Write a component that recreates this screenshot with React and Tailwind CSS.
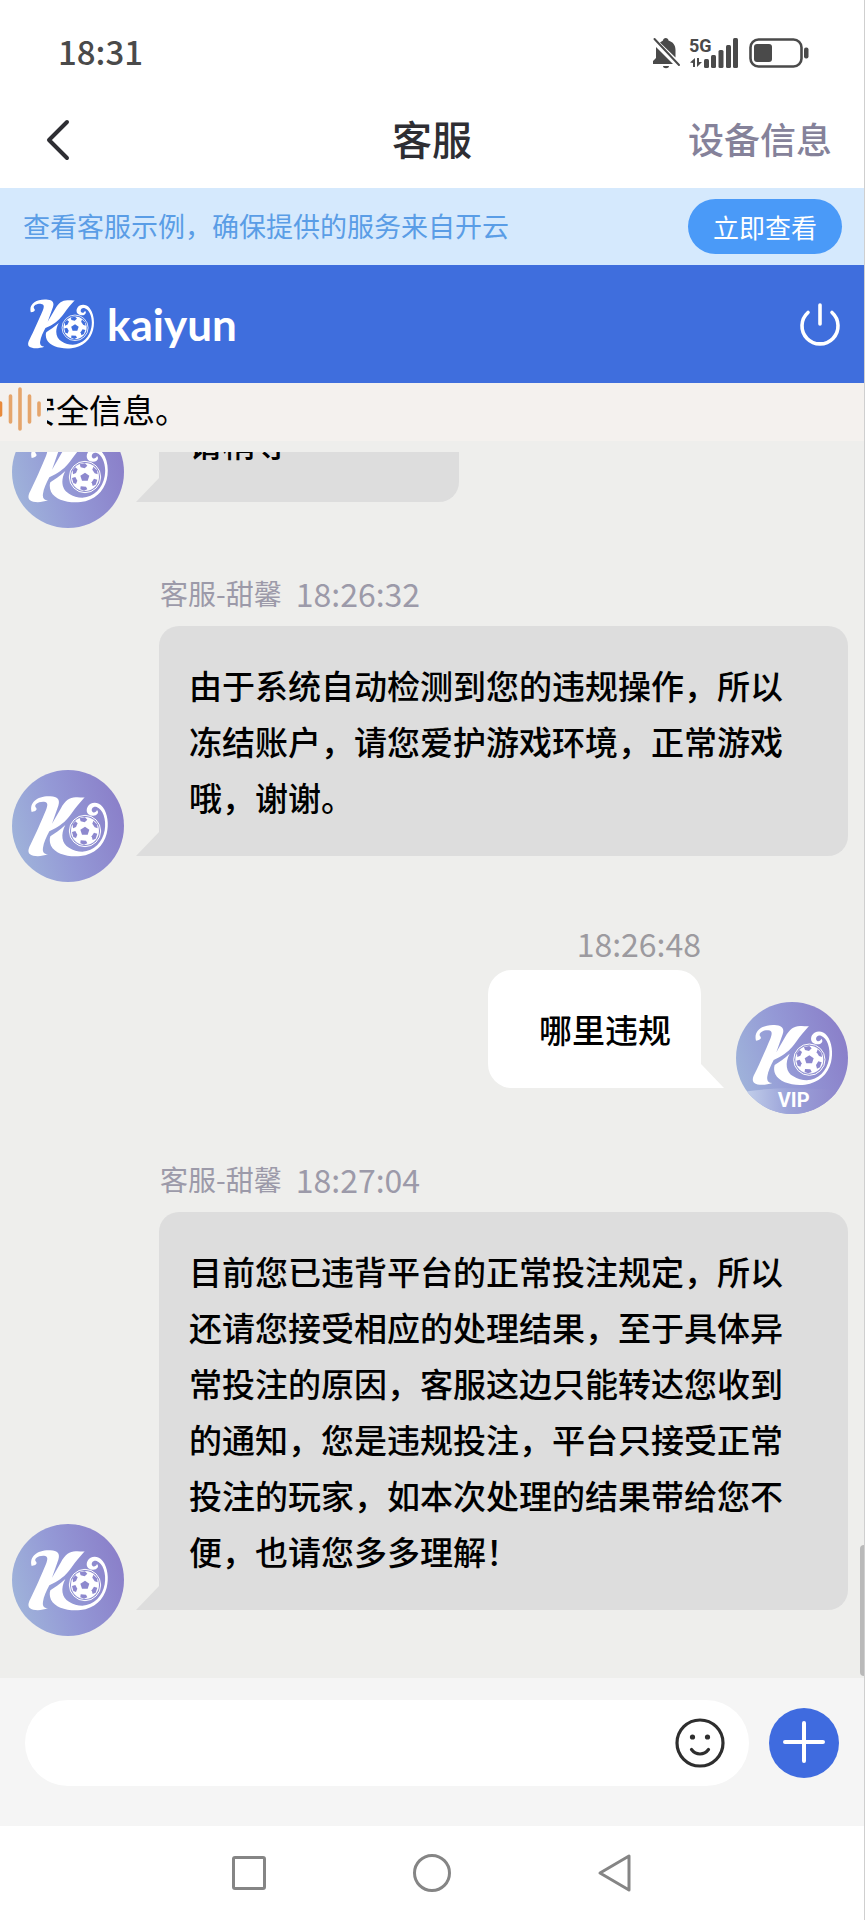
import React from "react";

function Ball() {
  return (
    <g>
      <circle cx="254" cy="210" r="47" fill="none" stroke="#fff" strokeWidth="3" />
      <circle cx="254" cy="210" r="42" fill="#fff" />
      <g fill="currentColor">
        <path d="M254 197 l13 9 -5 15 h-17 l-5 -15z" />
        <path d="M238 172 l16 -3 7 7 -8 8 -12 -3z" />
        <path d="M279 179 l11 11 2 12 -9 -3 -7 -11z" />
        <path d="M281 215 l10 3 -5 15 -9 4 -3 -11z" />
        <path d="M241 238 l16 1 4 8 -10 4 -11 -4z" />
        <path d="M215 213 l10 -3 6 11 -4 10 -8 -3z" />
        <path d="M217 190 l8 -9 7 6 -5 11 -9 4z" />
      </g>
    </g>
  );
}

function Emblem() {
  return (
    <g>
      <path
        fill="#fff"
        d="M94 153 C86 124 112 104 150 106 C172 107 180 116 174 134 L155 188 L181 143 C196 117 207 110 226 109 C238 108 247 111 253 109 C240 124 227 138 214 157 C199 178 186 190 165 202 L147 211 C138 228 130 245 128 260 C126 272 130 279 143 280 C124 287 99 288 88 279 C82 273 84 263 90 252 C105 222 123 180 137 147 C143 131 143 123 131 122 C112 121 101 131 106 139 C112 145 108 151 94 153Z"
      />
      <path
        fill="#fff"
        d="M150 226 C163 217 179 207 195 192 C180 220 184 248 206 260 C218 268 232 272 246 272 C281 270 307 244 313 208 C319 175 307 144 289 138 C279 135 272 143 275 151 C279 158 288 154 290 147 C298 155 289 165 277 164 C261 163 255 150 262 137 C270 123 293 120 307 138 C322 157 326 190 319 218 C310 254 282 280 241 285 C203 289 164 278 152 254 C148 245 147 234 150 226Z"
      />
      <Ball />
    </g>
  );
}

function Avatar({ vip = false }) {
  return (
    <svg
      className="size-28 shrink-0 text-[#8d88ce]"
      viewBox="35 27 336 336"
      role="img"
      aria-label={vip ? "VIP" : "客服"}
    >
      <defs>
        <linearGradient id="disc" x1="0" y1="0.65" x2="1" y2="0.35">
          <stop offset="0" stopColor="#9fb3da" />
          <stop offset="0.45" stopColor="#9499d6" />
          <stop offset="1" stopColor="#8a7fc9" />
        </linearGradient>
        <linearGradient id="ribbon" x1="0" y1="0" x2="1" y2="0">
          <stop offset="0" stopColor="#c3d0ea" />
          <stop offset="0.45" stopColor="#9ba3d9" />
          <stop offset="1" stopColor="#8f87cc" />
        </linearGradient>
        <clipPath id="round">
          <circle cx="203" cy="195" r="168" />
        </clipPath>
      </defs>
      <circle cx="203" cy="195" r="168" fill="url(#disc)" />
      {vip && (
        <path
          clipPath="url(#round)"
          fill="url(#ribbon)"
          d="M60 296 C150 282 260 284 350 294 L330 370 H60Z"
        />
      )}
      <g transform={vip ? "translate(1 -10)" : undefined}>
        <Emblem />
      </g>
      {vip && (
        <text
          x="208"
          y="343"
          textAnchor="middle"
          fill="#fff"
          fontSize="60"
          fontWeight="700"
          fontFamily="Roboto, sans-serif"
        >
          VIP
        </text>
      )}
    </svg>
  );
}

function AgentMessage({ name, time, children }) {
  return (
    <article className="pr-4 pl-3">
      {name && (
        <p className="mb-[13px] flex items-center gap-3.5 pl-[148px] text-[28px] leading-10 text-[#9c9aa9]">
          <span>{name}</span>
          <time className="text-[32px]">{time}</time>
        </p>
      )}
      <div className="flex items-end">
        <Avatar />
        <svg className="mb-[26px] ml-3 h-6 w-[23px] shrink-0" viewBox="0 0 23 24" aria-hidden="true">
          <path d="M0 24 L23 0 V24Z" fill="#dddddd" />
        </svg>
        <p className="mb-[26px] min-w-[300px] rounded-[20px] rounded-bl-none bg-[#dddddd] py-[31px] pr-10 pl-[30px] text-[33px] leading-[56px] font-medium text-black">
          {children}
        </p>
      </div>
    </article>
  );
}

function UserMessage({ time, children }) {
  return (
    <article className="pr-4 pl-3">
      <p className="mb-[11px] pr-[147px] text-right text-[32px] leading-8 text-[#9c9a9f]">
        <time>{time}</time>
      </p>
      <div className="flex items-end justify-end">
        <p className="mb-[26px] rounded-[24px] rounded-br-none bg-white py-[31px] pr-[30px] pl-[51px] text-[33px] leading-[56px] font-medium text-black">
          {children}
        </p>
        <svg className="mr-3 mb-[26px] h-6 w-[23px] shrink-0" viewBox="0 0 23 24" aria-hidden="true">
          <path d="M0 0 L23 24 H0Z" fill="#fff" />
        </svg>
        <Avatar vip />
      </div>
    </article>
  );
}

function StatusBar() {
  return (
    <div className="flex h-[106px] shrink-0 items-center justify-between pr-[55px] pl-[58px] text-[#4a4a4a]">
      <time className="pb-1 text-[33px] leading-10 font-medium">18:31</time>
      <svg className="h-8 w-[156px] overflow-visible" viewBox="0 0 156 32" aria-hidden="true">
        <g fill="#4a4a4a">
          <path d="M0 27 V24 L3 21 V10 L20 27Z" />
          <path d="M7 5.500 L10 3.500 C10 0 15.500 0 15.500 3.500 C20 5 22.500 8 22.500 13 V20.500Z" />
          <path d="M10 29 H16 C16 32 10 32 10 29Z" />
          <text x="36" y="15" fontSize="18" fontWeight="700" fontFamily="Roboto, sans-serif">
            5G
          </text>
          <path d="M37 25.500 L42 21 V30 H40 V26Z M44 21 H46 V25 L49 25 L44 30Z" />
          <rect x="51" y="22" width="5" height="9" rx="1.500" />
          <rect x="58" y="18" width="5" height="13" rx="1.500" />
          <rect x="65.500" y="13" width="5" height="18" rx="1.500" />
          <rect x="73" y="8" width="5" height="23" rx="1.500" />
          <rect x="80" y="1" width="5" height="30" rx="1.500" />
          <rect x="101" y="7" width="18" height="18" rx="3" />
          <rect x="151" y="10.500" width="4.500" height="11" rx="2" />
        </g>
        <path d="M1.500 2 L26 28" stroke="#4a4a4a" strokeWidth="2" strokeLinecap="round" />
        <rect x="97.500" y="2.500" width="51" height="27" rx="8" fill="none" stroke="#4a4a4a" strokeWidth="2.600" />
      </svg>
    </div>
  );
}

export default function App() {
  return (
    <div className="flex h-screen flex-col border-r border-[#cfcfcf] bg-white font-['Noto_Sans_CJK_SC',sans-serif]">
      <StatusBar />

      <header className="grid h-[82px] shrink-0 grid-cols-[1fr_auto_1fr] items-start px-8">
        <button type="button" aria-label="返回" className="mt-3 justify-self-start pl-3">
          <svg className="h-11 w-7" viewBox="0 0 28 44" fill="none" aria-hidden="true">
            <path d="M23 4 L5 22 L23 40" stroke="#2e2e33" strokeWidth="4" strokeLinecap="round" strokeLinejoin="round" />
          </svg>
        </button>
        <h1 className="mt-1 text-[40px] leading-14 font-medium text-[#2e2e33]">客服</h1>
        <a href="#device" className="mt-1 justify-self-end text-[36px] leading-14 font-medium text-[#85829a]">
          设备信息
        </a>
      </header>

      <div className="flex h-[77px] shrink-0 items-center justify-between bg-[#d5e9fd] pr-[22px] pl-[23px]">
        <p className="text-[27px] text-[#5a9de6]">查看客服示例，确保提供的服务来自开云</p>
        <button type="button" className="h-[55px] rounded-full bg-[#4a9af8] px-[25px] text-[26px] text-white">
          立即查看
        </button>
      </div>

      <div className="flex h-[118px] shrink-0 items-center justify-between bg-[#3f6edd] pr-[22px] pl-7">
        <div className="flex items-center gap-3">
          <svg className="h-[50px] w-[67px] text-[#3f6edd]" viewBox="84 104 242 184" preserveAspectRatio="none" aria-hidden="true">
            <Emblem />
          </svg>
          <span className="font-[Lato] text-[44px] leading-[52px] font-bold text-white">kaiyun</span>
        </div>
        <button type="button" aria-label="退出">
          <svg className="size-11" viewBox="0 0 44 44" fill="none" stroke="#fff" strokeWidth="3.600" strokeLinecap="round" aria-hidden="true">
            <path d="M22 3 V22" />
            <path d="M10 10.500 A18 18 0 1 0 34 10.500" />
          </svg>
        </button>
      </div>

      <div className="flex h-[58px] shrink-0 items-start bg-[#f4f1ee]">
        <svg className="mt-1 h-11 w-[47px] shrink-0" viewBox="0 0 47 44" stroke="#e5a56c" strokeWidth="3.600" strokeLinecap="round" aria-hidden="true">
          <path d="M0.500 16 V28" stroke="#e88a3c" />
          <path d="M10.500 9 V35 M20 2 V42 M29.500 9 V35 M39 16 V28" />
        </svg>
        <div className="flex min-w-0 flex-1 overflow-hidden">
          <p className="-ml-6 text-[33px] leading-[52px] whitespace-nowrap text-black">安全信息。</p>
        </div>
      </div>

      <main className="flex min-h-0 flex-1 flex-col bg-[#eeeeec] pt-[11px]">
        <div className="relative flex min-h-0 flex-1 flex-col justify-end gap-[45px] overflow-hidden pb-[42px]">
          <AgentMessage>请稍等</AgentMessage>
          <AgentMessage name="客服-甜馨" time="18:26:32">
            由于系统自动检测到您的违规操作，所以冻结账户，请您爱护游戏环境，正常游戏哦，谢谢。
          </AgentMessage>
          <UserMessage time="18:26:48">哪里违规</UserMessage>
          <AgentMessage name="客服-甜馨" time="18:27:04">
            目前您已违背平台的正常投注规定，所以还请您接受相应的处理结果，至于具体异常投注的原因，客服这边只能转达您收到的通知，您是违规投注，平台只接受正常投注的玩家，如本次处理的结果带给您不便，也请您多多理解！
          </AgentMessage>
          <div className="absolute right-0 bottom-0.5 h-[131px] w-1 rounded-l bg-[#b9b9b9]" />
        </div>
      </main>

      <form className="flex h-[148px] shrink-0 items-start gap-5 bg-[#f5f5f5] pt-[22px] pr-[25px] pl-[25px]">
        <div className="flex h-[86px] flex-1 items-center rounded-full bg-white pr-6 pl-8">
          <input type="text" aria-label="消息" className="h-full min-w-0 flex-1 bg-transparent text-[33px] outline-none" />
          <button type="button" aria-label="表情">
            <svg className="size-[50px]" viewBox="0 0 50 50" fill="none" aria-hidden="true">
              <circle cx="25" cy="25" r="23" stroke="#2e2e2e" strokeWidth="3.200" />
              <circle cx="17.500" cy="19" r="2.600" fill="#2e2e2e" />
              <circle cx="32.500" cy="19" r="2.600" fill="#2e2e2e" />
              <path d="M16.500 31.500 C21 37.500 29 37.500 33.500 31.500" stroke="#2e2e2e" strokeWidth="3.200" strokeLinecap="round" />
            </svg>
          </button>
        </div>
        <button type="button" aria-label="更多" className="mt-2 size-[70px] rounded-full bg-[#3f6bdf]">
          <svg className="size-full" viewBox="0 0 70 70" stroke="#fff" strokeWidth="4" strokeLinecap="round" aria-hidden="true">
            <path d="M35 15 V53 M16 34 H54" />
          </svg>
        </button>
      </form>

      <nav className="flex h-[94px] shrink-0 items-center justify-center gap-[143px]">
        <button type="button" aria-label="最近任务">
          <svg className="size-10" viewBox="0 0 40 40" fill="none" stroke="#858585" strokeWidth="3" aria-hidden="true">
            <rect x="4.500" y="4.500" width="31" height="31" rx="1.500" />
          </svg>
        </button>
        <button type="button" aria-label="主屏幕">
          <svg className="size-10" viewBox="0 0 40 40" fill="none" stroke="#858585" strokeWidth="3" aria-hidden="true">
            <circle cx="20" cy="20" r="17.500" />
          </svg>
        </button>
        <button type="button" aria-label="返回上一页">
          <svg className="size-10" viewBox="0 0 40 40" fill="none" stroke="#858585" strokeWidth="3" strokeLinejoin="round" aria-hidden="true">
            <path d="M5 20 L34 3 V37Z" />
          </svg>
        </button>
      </nav>
    </div>
  );
}
